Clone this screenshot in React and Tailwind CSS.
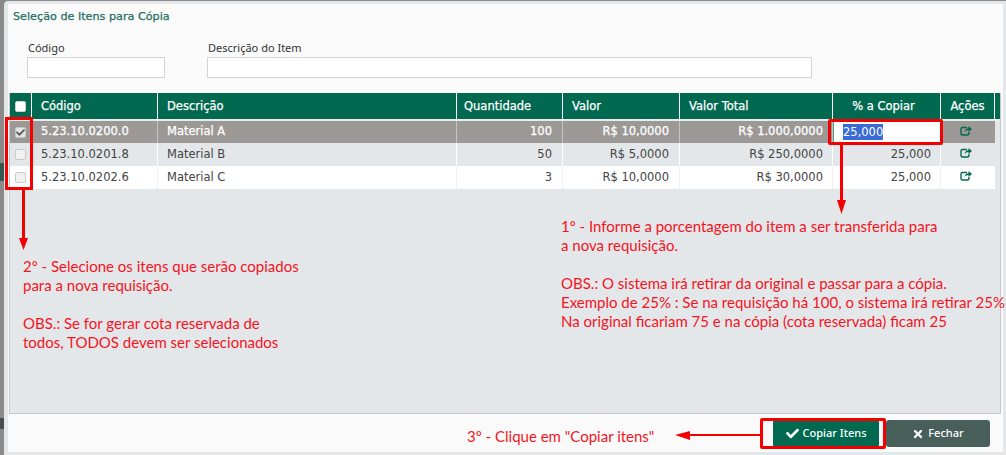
import React from 'react';
import { FaCheck, FaTimes } from 'react-icons/fa';

const font = "font-['DejaVu_Sans',sans-serif]";
const note = "font-['Lato',sans-serif] text-[15px] leading-[19px] text-[#f5141e] whitespace-pre absolute";
const heavy = '[-webkit-text-stroke:0.25px]';

const rows = [
  { codigo: '5.23.10.0200.0', nome: 'Material A', qtd: '100', valor: 'R$ 10,0000', total: 'R$ 1.000,0000', sel: true },
  { codigo: '5.23.10.0201.8', nome: 'Material B', qtd: '50', valor: 'R$ 5,0000', total: 'R$ 250,0000' },
  { codigo: '5.23.10.0202.6', nome: 'Material C', qtd: '3', valor: 'R$ 10,0000', total: 'R$ 30,0000' },
];

const ShareIcon = () => (
  <svg width="12" height="11" viewBox="0 0 12 11" fill="none">
    <path d="M7 2.500H2.500a1.500 1.500 0 0 0-1.500 1.500v4.500a1.500 1.500 0 0 0 1.500 1.500h5a1.500 1.500 0 0 0 1.500-1.500V7" stroke="#00694f" strokeWidth="1.400" />
    <path d="M4.500 7C4.800 4.500 6.500 3.200 8.500 3.200V1L12 4 8.500 7V5C6.800 5 5.500 5.700 4.500 7Z" fill="#00694f" />
  </svg>
);

const Box = ({ checked, header }) => (
  <span className={`mx-auto flex items-center justify-center w-[11px] h-[11px] rounded-[2px] border ${header ? 'bg-white border-[#d0d0d0]' : checked ? 'bg-[#e4e4e4] border-[#c4c4c4]' : 'bg-[#f1f1f1] border-[#c9c9c9]'}`}>
    {checked && <FaCheck size={9} className="text-[#55595a]" />}
  </span>
);

const gridCols = 'grid grid-cols-[22px_126px_299px_106px_117px_153px_108px_54px]';

const Row = ({ row, index }) => {
  const bg = row.sel ? `h-[22px] bg-[#9c9896] text-white ${heavy}` : index === 1 ? 'h-[23px] bg-[#e3e7ea] text-[#444]' : 'h-[23px] bg-white text-[#444]';
  const cell = row.sel ? 'border-r border-[#c6c4c3]' : index === 1 ? 'border-r border-white' : 'border-r border-[#f0f0f0]';
  return (
    <div className={`${gridCols} items-stretch text-[11.5px] ${bg}`}>
      <div className={`flex items-center ${cell}`}><Box checked={row.sel} /></div>
      <div className={`flex items-center pl-[9px] ${cell}`}>{row.codigo}</div>
      <div className={`flex items-center pl-[9px] ${cell}`}>{row.nome}</div>
      <div className={`flex items-center justify-end pr-[10px] ${cell}`}>{row.qtd}</div>
      <div className={`flex items-center justify-end pr-[10px] ${cell}`}>{row.valor}</div>
      <div className={`flex items-center justify-end pr-[9px] ${cell}`}>{row.total}</div>
      {row.sel ? (
        <div className="flex items-center bg-white border border-[#3f9e86] pl-[9px] [-webkit-text-stroke:0px]">
          <span className="bg-[#3a6bd6] text-white leading-[16px]">25,000</span>
        </div>
      ) : (
        <div className={`flex items-center justify-end pr-[9px] ${cell}`}>25,000</div>
      )}
      <div className="flex items-start justify-center pt-[4px] pr-[5px]">
        <ShareIcon />
      </div>
    </div>
  );
};

export default function App() {
  return (
    <div className={`relative w-[1006px] h-[455px] overflow-hidden bg-[#8a8a8a] pl-[4px] pt-[1px] ${font}`}>
      {/* restos da tela de tras, na faixa da esquerda */}
      <div className="absolute left-0 top-[163px] w-[4px] h-[18px] bg-[#2f5a50]" />
      <div className="absolute left-0 top-[418px] w-[4px] h-[11px] bg-[#4c4c4c]" />

      <div className="h-[454px] w-[1002px] bg-[#fafafa] border-l-[4px] border-t-[3px] border-r-[3px] border-b-[3px] border-[#e3e7ea] rounded-tl-[4px]">
        <h1 className={`pl-[5px] pt-[5px] text-[11.2px] leading-[16px] text-[#1f6f62] ${heavy}`}>Seleção de Itens para Cópia</h1>

        <div className="flex gap-[42px] mt-[16px] pl-[19px] text-[#333] text-[11px] font-['Noto_Sans',sans-serif]">
          <label className="flex flex-col w-[138px]">
            <span className="leading-[14px] mb-[2px] pl-[1px]">Código</span>
            <input className="h-[21px] border border-[#d4d4d4] bg-white" />
          </label>
          <label className="flex flex-col w-[605px]">
            <span className="leading-[14px] mb-[2px] pl-[1px]">Descrição do Item</span>
            <input className="h-[21px] border border-[#d4d4d4] bg-white" />
          </label>
        </div>

        <div className="ml-[1px] mt-[15px] w-[992px] h-[321px] bg-[#e3e7ea] border-r border-b border-l border-[#c4c8ca]">
          <div className={`${gridCols} bg-[#00694f] w-full text-white text-[11.5px] border-b-2 border-[#e8ecec] box-content h-[26px] ${heavy}`}>
            <div className="flex items-center border-r border-white"><Box header /></div>
            <div className="flex items-center pl-[9px] pt-[2px] border-r border-white">Código</div>
            <div className="flex items-center pl-[9px] pt-[2px] border-r border-white">Descrição</div>
            <div className="flex items-center pl-[7px] pt-[2px] border-r border-white">Quantidade</div>
            <div className="flex items-center pl-[9px] pt-[2px] border-r border-white">Valor</div>
            <div className="flex items-center pl-[9px] pt-[2px] border-r border-white">Valor Total</div>
            <div className="flex items-center justify-center pt-[2px] pr-[6px] border-r border-white">% a Copiar</div>
            <div className="flex items-center justify-center pt-[2px] border-r border-white">Ações</div>
          </div>
          <div className="w-[985px]">
            {rows.map((row, i) => <Row key={row.codigo} row={row} index={i} />)}
          </div>
        </div>

        <div className="flex justify-end gap-[7px] mt-[6px] pr-[13px] text-[11px] text-white font-medium font-['Noto_Sans',sans-serif]">
          <button className="h-[27px] w-[106px] rounded-[2px] bg-[#00694f] flex items-center justify-center gap-[4px]">
            <FaCheck size={13} />Copiar Itens
          </button>
          <button className="h-[27px] w-[104px] rounded-[3px] bg-[#49605a] flex items-center justify-center gap-[4px]">
            <FaTimes size={12} />Fechar
          </button>
        </div>
      </div>

      {/* anotacoes em vermelho por cima da tela */}
      <div className="absolute left-[5px] top-[117px] w-[28px] h-[73px] border-[3px] border-[#f40000]" />
      <div className="absolute left-[828px] top-[119px] w-[115px] h-[26px] border-[3px] border-[#f40000] rounded-[2px]" />
      <div className="absolute left-[760px] top-[418px] w-[126px] h-[31px] border-[3px] border-[#f40000] rounded-[2px]" />

      <svg className="absolute left-0 top-0" width="1006" height="455" fill="#f40000">
        <rect x="22" y="190" width="3" height="52" />
        <polygon points="19,238 28,238 23.500,250" />
        <rect x="840" y="145" width="3" height="60" />
        <polygon points="837,200 846,200 841.500,214" />
        <rect x="688" y="434" width="72" height="2" />
        <polygon points="675,435 690,431 690,440" />
      </svg>

      <p className={`${note} left-[23px] top-[257px]`}>{'2º - Selecione os itens que serão copiados\npara a nova requisição.\n\nOBS.: Se for gerar cota reservada de\ntodos, TODOS devem ser selecionados'}</p>
      <p className={`${note} left-[561px] top-[217px]`}>{'1º - Informe a porcentagem do item a ser transferida para\na nova requisição.\n\nOBS.: O sistema irá retirar da original e passar para a cópia.\nExemplo de 25% : Se na requisição há 100, o sistema irá retirar 25%\nNa original ficariam 75 e na cópia (cota reservada) ficam 25'}</p>
      <p className={`${note} left-[467px] top-[427px]`}>3º - Clique em "Copiar itens"</p>
    </div>
  );
}
